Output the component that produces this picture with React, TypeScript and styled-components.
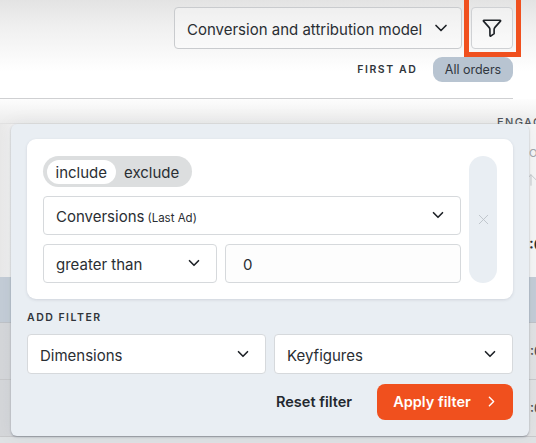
import React, { useState } from 'react';
import styled, { createGlobalStyle } from 'styled-components';
import { ChevronDown, ChevronRight, ArrowUp, X } from 'lucide-react';

const GlobalStyle = createGlobalStyle`
  html, body {
    margin: 0;
    padding: 0;
    background: #fff;
  }
  * {
    box-sizing: border-box;
  }
`;

const Page = styled.div`
  position: relative;
  width: 536px;
  height: 443px;
  overflow: hidden;
  color: #23282e;
  font-family: Inter, 'Liberation Sans', sans-serif;
  background: linear-gradient(180deg, #e3e3e3 0%, #efefef 25px, #ffffff 72px);
`;

const Toolbar = styled.div`
  display: flex;
  justify-content: flex-end;
  align-items: stretch;
  gap: 9px;
  height: 49px;
  padding: 7px 23px 0 0;
`;

const ModelSelect = styled.div`
  display: flex;
  align-items: center;
  justify-content: space-between;
  width: 288px;
  padding: 0 10px 0 12px;
  border: 1px solid #c9cbce;
  border-radius: 4px;
  background: rgba(255, 255, 255, 0.35);
  font-size: 15px;
  color: #2a2e33;
`;

const FilterButton = styled.button`
  position: relative;
  display: flex;
  align-items: center;
  justify-content: center;
  width: 42px;
  padding: 0;
  border: 1px solid #cfd1d4;
  border-radius: 4px;
  background: rgba(255, 255, 255, 0.4);
  color: #1e2227;

  &::after {
    content: '';
    position: absolute;
    top: -14px;
    left: -8px;
    right: -9px;
    bottom: -9px;
    border: 5px solid #f0501e;
  }
`;

const OrdersRow = styled.div`
  display: flex;
  justify-content: flex-end;
  align-items: center;
  gap: 15.5px;
  height: 25px;
  margin-top: 8px;
  padding-right: 23px;
`;

const OrdersLabel = styled.span`
  font-size: 10.5px;
  font-weight: 600;
  letter-spacing: 1.6px;
  color: #30353b;
`;

const OrdersPill = styled.span`
  display: flex;
  align-items: center;
  justify-content: center;
  width: 80px;
  height: 25px;
  border-radius: 9px;
  background: #b8c4d1;
  font-size: 12.5px;
  color: #30373f;
`;

const Divider = styled.div`
  height: 1px;
  margin: 16px 23px 0 0;
  background: #cfd0d2;
`;

const Table = styled.div`
  display: flex;
  flex-direction: column;
`;

const ColumnTitle = styled.div`
  height: 25px;
  padding: 16px 0 0 497px;
  border-bottom: 1px solid #e2e2e2;
  background: linear-gradient(180deg, #fdfdfd 0%, #ececec 100%);
  font-size: 11px;
  font-weight: 500;
  letter-spacing: 1.4px;
  white-space: nowrap;
  color: #50565c;
`;

const SummaryRow = styled.div`
  display: flex;
  flex-direction: column;
  align-items: flex-start;
  height: 153px;
  padding: 22px 0 0 529px;
  overflow: hidden;
  white-space: nowrap;
  background: linear-gradient(90deg, #e9e9e9 0%, #f2f2f2 14px, #f6f6f6 100%);
  font-size: 11px;
  color: #a4a8ad;
`;

const SummaryArrow = styled(ArrowUp)`
  margin: 11px 0 0 -7px;
  color: #c2c5c9;
`;

const SummaryValue = styled.span`
  margin-top: 46px;
  font-size: 15px;
  font-weight: 600;
  color: #2b2f34;
`;

const BandRow = styled.div`
  height: 46px;
  border-bottom: 1px solid #bfc3c8;
  background: #c4cdd7;
`;

const DataRow = styled.div`
  display: flex;
  align-items: center;
  height: 57px;
  padding-left: 530px;
  border-bottom: 1px solid #c8c9cb;
  background: linear-gradient(90deg, #d5d7da 0%, #e2e3e4 100%);
  font-size: 13px;
  font-weight: 500;
  color: #4a4e53;
`;

const TableEnd = styled.div`
  height: 70px;
  background: #dfe2e4;
`;

const Popover = styled.div`
  position: absolute;
  top: 124px;
  left: 11px;
  width: 518px;
  height: 312px;
  padding: 15px 16px 0;
  border-radius: 6px;
  background: #e9eef3;
  box-shadow: 0 1px 2px rgba(60, 70, 85, 0.4), 0 0 20px rgba(40, 50, 60, 0.06);
`;

const FilterCard = styled.div`
  display: grid;
  grid-template-columns: 418px 28px;
  justify-content: space-between;
  height: 160px;
  padding: 17px 16px 16px;
  border-radius: 9px;
  background: #ffffff;
  box-shadow: 0 1px 3px rgba(60, 70, 85, 0.15);
`;

const FilterFields = styled.div`
  display: flex;
  flex-direction: column;
  gap: 8.5px;
`;

const ModeToggle = styled.div`
  display: flex;
  align-items: center;
  align-self: flex-start;
  height: 31px;
  padding: 0 4px;
  border-radius: 16px;
  background: #dcdedf;
`;

const ModeOption = styled.button<{ $active?: boolean }>`
  height: 24px;
  padding: 2px 8.5px 0;
  border: none;
  border-radius: 12px;
  background: ${props => (props.$active ? '#ffffff' : 'transparent')};
  font-family: inherit;
  font-size: 15px;
  color: #2a2e33;
  cursor: pointer;
`;

const SelectBox = styled.div<{ $width?: number; $flex?: boolean }>`
  display: flex;
  align-items: center;
  justify-content: space-between;
  flex: ${props => (props.$flex ? '1' : 'none')};
  width: ${props => (props.$width ? `${props.$width}px` : 'auto')};
  height: 39.5px;
  padding: 0 13px 0 12px;
  border: 1px solid #d6d9dc;
  border-radius: 4px;
  background: #ffffff;
  font-size: 15px;
  color: #2a2e33;
`;

const SelectText = styled.span`
  margin-top: 3px;
  white-space: nowrap;
`;

const SelectHint = styled.small`
  margin-left: 3px;
  font-size: 11.5px;
`;

const ConditionRow = styled.div`
  display: flex;
  gap: 8px;
`;

const ValueInput = styled.div`
  flex: 1;
  height: 39.5px;
  padding: 0 17px;
  border: 1px solid #d6d9dc;
  border-radius: 4px;
  background: #fdfdfd;
  font-size: 15px;
  line-height: 40px;
  color: #2a2e33;
`;

const RemoveBar = styled.button`
  display: flex;
  align-items: center;
  justify-content: center;
  padding: 0;
  border: none;
  border-radius: 14px;
  background: #e9eef3;
  color: #b9bfc6;
  cursor: pointer;
`;

const AddLabel = styled.div`
  margin-top: 12px;
  font-size: 10.5px;
  font-weight: 600;
  line-height: 13px;
  letter-spacing: 1.5px;
  color: #2f343a;
`;

const AddRow = styled.div`
  display: flex;
  gap: 8px;
  margin-top: 10px;
`;

const Actions = styled.div`
  display: flex;
  justify-content: flex-end;
  align-items: center;
  gap: 25px;
  margin-top: 10px;
`;

const ResetButton = styled.button`
  padding: 0;
  border: none;
  background: none;
  font-family: inherit;
  font-size: 14.5px;
  font-weight: 600;
  color: #23282e;
  cursor: pointer;
`;

const ApplyButton = styled.button`
  display: flex;
  align-items: center;
  justify-content: center;
  gap: 12px;
  width: 136px;
  height: 36px;
  padding: 0 0 0 3px;
  border: none;
  border-radius: 8px;
  background: #f0501e;
  font-family: inherit;
  font-size: 14.5px;
  font-weight: 600;
  color: #ffffff;
  cursor: pointer;
`;

const FunnelIcon = () => (
  <svg width="22" height="22" viewBox="0 0 24 24" fill="none" stroke="currentColor" strokeWidth="1.8" strokeLinejoin="round">
    <path d="M3.2 3.5h17.6a.6.6 0 0 1 .45 1l-6.05 6.8c-.6.7-.9 1.4-.9 2.2v4.7l-3.7 2.6c-.4.2-.8 0-.8-.5l-.1-6.8c0-.8-.3-1.5-.9-2.2L2.75 4.5a.6.6 0 0 1 .45-1z" />
  </svg>
);

const Chevron = () => <ChevronDown size={18} strokeWidth={2.2} color="#1e2227" />;

const App: React.FC = () => {
  const [mode, setMode] = useState<'include' | 'exclude'>('include');

  return (
    <Page>
      <GlobalStyle />
      <Toolbar>
        <ModelSelect>
          <SelectText>Conversion and attribution model</SelectText>
          <ChevronDown size={20} strokeWidth={2} color="#1e2227" />
        </ModelSelect>
        <FilterButton title="Filter">
          <FunnelIcon />
        </FilterButton>
      </Toolbar>
      <OrdersRow>
        <OrdersLabel>FIRST AD</OrdersLabel>
        <OrdersPill>All orders</OrdersPill>
      </OrdersRow>
      <Divider />
      <Table>
        <ColumnTitle>ENGAGEMENT</ColumnTitle>
        <SummaryRow>
          <span>OUTBOUND</span>
          <SummaryArrow size={18} strokeWidth={1.2} />
          <SummaryValue>:00</SummaryValue>
        </SummaryRow>
        <BandRow />
        <DataRow>:00</DataRow>
        <DataRow>:00</DataRow>
        <TableEnd />
      </Table>

      <Popover>
        <FilterCard>
          <FilterFields>
            <ModeToggle>
              <ModeOption $active={mode === 'include'} onClick={() => setMode('include')}>include</ModeOption>
              <ModeOption $active={mode === 'exclude'} onClick={() => setMode('exclude')}>exclude</ModeOption>
            </ModeToggle>
            <SelectBox>
              <SelectText>
                Conversions<SelectHint>(Last Ad)</SelectHint>
              </SelectText>
              <Chevron />
            </SelectBox>
            <ConditionRow>
              <SelectBox $width={174}>
                <SelectText>greater than</SelectText>
                <Chevron />
              </SelectBox>
              <ValueInput>0</ValueInput>
            </ConditionRow>
          </FilterFields>
          <RemoveBar title="Remove">
            <X size={17} strokeWidth={1.2} />
          </RemoveBar>
        </FilterCard>
        <AddLabel>ADD FILTER</AddLabel>
        <AddRow>
          <SelectBox $flex>
            <SelectText>Dimensions</SelectText>
            <Chevron />
          </SelectBox>
          <SelectBox $flex>
            <SelectText>Keyfigures</SelectText>
            <Chevron />
          </SelectBox>
        </AddRow>
        <Actions>
          <ResetButton>Reset filter</ResetButton>
          <ApplyButton>
            Apply filter
            <ChevronRight size={17} strokeWidth={2} />
          </ApplyButton>
        </Actions>
      </Popover>
    </Page>
  );
};

export default App;
